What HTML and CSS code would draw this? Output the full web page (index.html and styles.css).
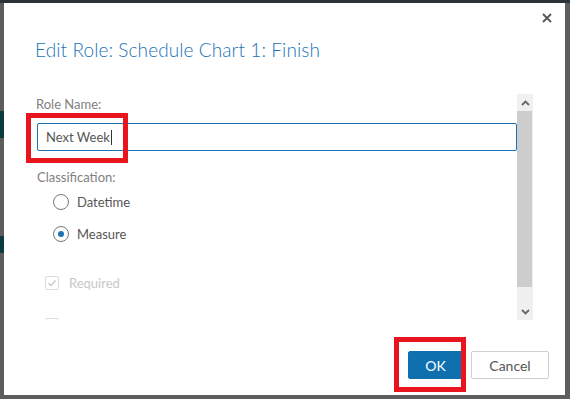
FILE: index.html
```html
<!DOCTYPE html>
<html>
<head>
<meta charset="utf-8">
<link rel="stylesheet" href="styles.css">
</head>
<body>
<div class="backdrop">
  <div class="dialog">
    <button class="close" aria-label="Close">
      <svg width="10" height="10" viewBox="0 0 10 10"><path d="M1 1L9 9M9 1L1 9" stroke="#555" stroke-width="1.8" fill="none"/></svg>
    </button>
    <h1 class="title">Edit Role: Schedule Chart 1: Finish</h1>
    <div class="scroll">
      <div class="content">
        <div class="label">Role Name:</div>
        <div class="input">Next Week<span class="caret"></span></div>
        <div class="label label-class">Classification:</div>
        <div class="radios">
          <div class="radio-row"><span class="radio"></span><span class="rtext">Datetime</span></div>
          <div class="radio-row"><span class="radio checked"></span><span class="rtext">Measure</span></div>
        </div>
        <div class="check-row"><span class="check">
          <svg width="10" height="10" viewBox="0 0 10 10"><path d="M1.5 5.2L4 7.6L8.6 2.4" stroke="#c4c4c4" stroke-width="1.3" fill="none"/></svg>
        </span><span class="ctext">Required</span></div>
        <div class="check-row second"><span class="check"></span><span class="ctext">Allow multiple columns</span></div>
      </div>
      <div class="scrollbar">
        <div class="sb-btn"><svg width="9" height="6" viewBox="0 0 9 6"><path d="M1 5L4.5 1.5L8 5" stroke="#666" stroke-width="1.8" fill="none"/></svg></div>
        <div class="sb-track"><div class="sb-thumb"></div></div>
        <div class="sb-btn"><svg width="9" height="6" viewBox="0 0 9 6"><path d="M1 1L4.5 4.5L8 1" stroke="#666" stroke-width="1.8" fill="none"/></svg></div>
      </div>
    </div>
    <div class="footer">
      <button class="btn primary">OK</button>
      <button class="btn secondary">Cancel</button>
    </div>
  </div>
  <div class="mark mark-input"></div>
  <div class="mark mark-ok"></div>
</div>
</body>
</html>
```

FILE: styles.css
```css
html, body {
  margin: 0;
  padding: 0;
}
body {
  width: 570px;
  height: 399px;
  overflow: hidden;
  font-family: Lato, "Open Sans", sans-serif;
  background:
    linear-gradient(#0e3a3d, #0e3a3d) 0 111px / 4px 27px no-repeat,
    linear-gradient(#0e3a3d, #0e3a3d) 0 236px / 4px 17px no-repeat,
    linear-gradient(#2b3338, #2b3338) 0 0 / 570px 3px no-repeat,
    #5d5d5d;
}
.backdrop {
  position: relative;
  width: 570px;
  height: 399px;
  padding-top: 3px;
  padding-left: 4px;
  box-sizing: border-box;
}
.dialog {
  position: relative;
  width: 561px;
  height: 392px;
  background: #fff;
  display: flex;
  flex-direction: column;
  box-sizing: border-box;
}
.close {
  position: absolute;
  top: 10px;
  right: 13px;
  width: 10px;
  height: 10px;
  padding: 0;
  border: 0;
  background: none;
  display: flex;
}
.title {
  margin: 35px 0 0 31px;
  font-size: 19px;
  line-height: 24px;
  font-weight: 300;
  color: #1b73b6;
  letter-spacing: 0.1px;
}
.scroll {
  margin: 32px 32px 0 31px;
  height: 226px;
  display: flex;
}
.content {
  flex: 1;
  overflow: hidden;
  padding-left: 2px;
}
.label {
  font-size: 13px;
  line-height: 16px;
  color: #808080;
  margin-top: 2px;
  margin-left: -1px;
}
.input {
  margin-top: 11px;
  height: 28px;
  box-sizing: border-box;
  border: 1px solid #1b73b6;
  border-radius: 2px;
  font-size: 13px;
  line-height: 26px;
  color: #555;
  padding-left: 8px;
  display: flex;
  align-items: center;
}
.caret {
  display: inline-block;
  width: 1px;
  height: 15px;
  background: #333;
  margin-left: 1px;
}
.label-class {
  margin-top: 18px;
  margin-left: 0;
}
.radios {
  margin-top: 1px;
  padding-left: 16px;
}
.radio-row {
  display: flex;
  align-items: center;
  height: 32px;
}
.radio {
  width: 16px;
  height: 16px;
  box-sizing: border-box;
  border: 1px solid #777;
  border-radius: 50%;
  margin-right: 8px;
  display: flex;
  align-items: center;
  justify-content: center;
}
.radio.checked::after {
  content: "";
  width: 6px;
  height: 6px;
  border-radius: 50%;
  background: #1b73b6;
}
.rtext {
  font-size: 13px;
  color: #555;
}
.check-row {
  display: flex;
  align-items: center;
  padding-left: 8px;
  margin-top: 25px;
  height: 16px;
}
.check-row.second {
  margin-top: 26px;
}
.check {
  width: 14px;
  height: 14px;
  box-sizing: border-box;
  border: 1px solid #dadada;
  border-radius: 2px;
  margin-right: 10px;
  display: flex;
  align-items: center;
  justify-content: center;
}
.ctext {
  font-size: 13px;
  color: #c8c8c8;
}
.scrollbar {
  width: 16px;
  background: #f0f0f0;
  display: flex;
  flex-direction: column;
}
.sb-btn {
  height: 17px;
  display: flex;
  align-items: center;
  justify-content: center;
}
.sb-track {
  flex: 1;
  display: flex;
  flex-direction: column;
}
.sb-thumb {
  height: 176px;
  margin-right: 1px;
  background: #cdcdcd;
}
.footer {
  margin-top: 31px;
  padding-right: 16px;
  display: flex;
  justify-content: flex-end;
  gap: 8px;
}
.btn {
  height: 28px;
  border-radius: 2px;
  font-family: Lato, "Open Sans", sans-serif;
  font-size: 14px;
  padding: 0;
}
.primary {
  width: 55px;
  background: #0f70b0;
  border: 1px solid #0f70b0;
  color: #fff;
}
.secondary {
  width: 78px;
  background: #fff;
  border: 1px solid #cfcfcf;
  color: #555;
}
.mark {
  position: absolute;
  border: 5px solid #e8151f;
  box-sizing: border-box;
}
.mark-input {
  left: 26px;
  top: 113px;
  width: 102px;
  height: 50px;
}
.mark-ok {
  left: 394px;
  top: 337px;
  width: 72px;
  height: 55px;
}
```
